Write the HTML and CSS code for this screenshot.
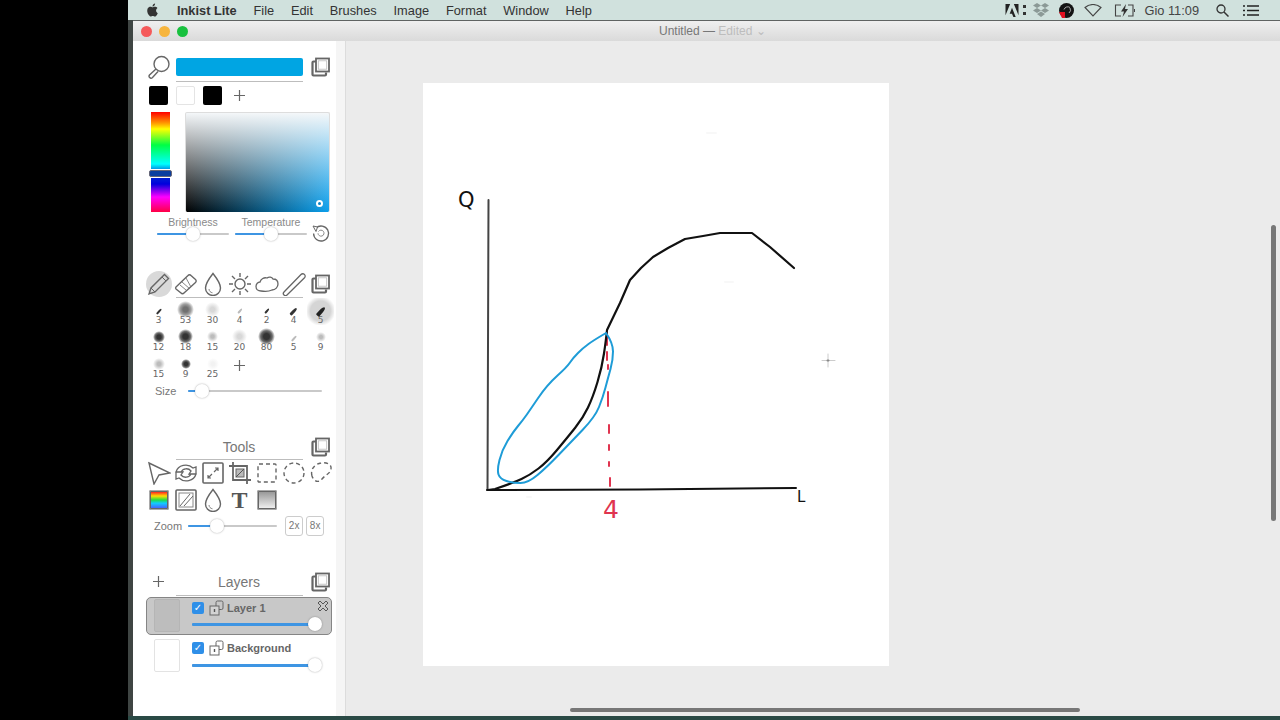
FILE: index.html
```html
<!DOCTYPE html>
<html lang="en">
<head>
<meta charset="utf-8">
<title>Inkist Lite</title>
<link rel="stylesheet" href="styles.css">
</head>
<body>
<svg class="defs" xmlns="http://www.w3.org/2000/svg">
  <symbol id="clone" viewBox="0 0 20 20"><path d="M13 4.500H2.500a1 1 0 0 0-1 1v12a1 1 0 0 0 1 1H14a1 1 0 0 0 1-1v-2" fill="none" stroke="#666" stroke-width="2.200"/><rect x="5" y="1.500" width="13" height="13" fill="#fff" stroke="#666" stroke-width="1.800"/><rect x="7.300" y="3.800" width="8.400" height="8.400" fill="#fff" stroke="#bbb" stroke-width=".8"/></symbol>
  <symbol id="plus" viewBox="0 0 13 13"><path d="M6.500 1v11M1 6.500h11" stroke="#666" stroke-width="1.200"/></symbol>
  <symbol id="lock" viewBox="0 0 16 16"><rect x="1" y="6" width="9" height="9" fill="#fff" fill-opacity=".2" stroke="#666"/><path d="M7 6V2.500a1.500 1.500 0 0 1 1.500-1.500h4A1.500 1.500 0 0 1 14 2.500V8a1.500 1.500 0 0 1-1.500 1.500H10" fill="none" stroke="#666"/><path d="M5.500 9v3" stroke="#555" stroke-width="1.400"/></symbol>
  <symbol id="drop" viewBox="0 0 24 24"><path d="M12 1.500C12 1.500 4.500 11 4.500 16a7.500 7.500 0 0 0 15 0C19.500 11 12 1.500 12 1.500Z" fill="none" stroke="#666" stroke-width="1.400"/><path d="M8 17c0 2 1.500 3.500 3.500 3.800" fill="none" stroke="#888"/></symbol>
</svg>

<div class="desktop-side"></div>
<div class="desktop">
  <header class="menubar">
    <svg class="apple" viewBox="0 0 24 24"><path fill="#333" d="M12.152 6.896c-.948 0-2.415-1.078-3.96-1.04-2.04.027-3.91 1.183-4.961 3.014-2.117 3.675-.546 9.103 1.519 12.09 1.013 1.454 2.208 3.09 3.792 3.039 1.52-.065 2.09-.987 3.935-.987 1.831 0 2.35.987 3.96.948 1.637-.026 2.676-1.48 3.676-2.948 1.156-1.688 1.636-3.325 1.662-3.415-.039-.013-3.182-1.221-3.22-4.857-.026-3.04 2.48-4.494 2.597-4.559-1.429-2.09-3.623-2.324-4.39-2.376-2-.156-3.675 1.09-4.61 1.09zM15.53 3.83c.843-1.012 1.4-2.427 1.245-3.83-1.207.052-2.662.805-3.532 1.818-.78.896-1.454 2.338-1.273 3.714 1.338.104 2.715-.688 3.559-1.701"/></svg>
    <nav class="menus">
      <span class="app">Inkist Lite</span><span>File</span><span>Edit</span><span>Brushes</span><span>Image</span><span>Format</span><span>Window</span><span>Help</span>
    </nav>
    <div class="status">
      <svg class="st-adobe" viewBox="0 0 14 14"><path fill="#222" d="M0 0h5L0 12zM14 0H9l5 12zM7 4l4 10H8.500L7 10.500H4.500z"/></svg>
      <svg class="st-dots" viewBox="0 0 3 12"><path fill="#333" d="M0 1h3v3H0zM0 8h3v3H0z"/></svg>
      <svg class="st-dropbox" viewBox="0 0 16 16"><path fill="#8b9996" d="M4 1l4 2.500L4 6 0 3.500zM12 1l4 2.500L12 6 8 3.500zM4 6l4 2.500L4 11 0 8.500zM12 6l4 2.500L12 11 8 8.500zM8 9.500l4 2.500-4 3-4-3z"/></svg>
      <svg class="st-obs" viewBox="0 0 15 15"><circle cx="7.500" cy="7.500" r="7.500" fill="#141414"/><path d="M0 9h6v6H3z" fill="#e01020"/><path d="M5 6.500a4 4 0 0 1 6-2M11 5a4 4 0 0 1-1 5" fill="none" stroke="#ccc" stroke-width=".8"/></svg>
      <svg class="st-wifi" viewBox="0 0 18 13"><path d="M1 3.500C5.500-.5 12.500-.5 17 3.500L9 12z" fill="none" stroke="#444" stroke-width="1.100"/></svg>
      <svg class="st-batt" viewBox="0 0 21 13"><path d="M7 1H1.500v11H7M14 1h5v11h-5" fill="none" stroke="#444" stroke-width="1.100"/><path d="M12 0L7 7.500h3L8.500 13l5.500-8h-3z" fill="#333"/><path d="M20 5h1v3h-1z" fill="#444"/></svg>
      <span class="clock">Gio 11:09</span>
      <svg class="st-search" viewBox="0 0 13 13"><circle cx="5" cy="5" r="4" fill="none" stroke="#333" stroke-width="1.300"/><path d="M8 8l4.500 4.500" stroke="#333" stroke-width="1.500"/></svg>
      <svg class="st-list" viewBox="0 0 16 11"><path d="M4 1h12M4 5.500h12M4 10h12M0 1h2M0 5.500h2M0 10h2" stroke="#222" stroke-width="1.300"/></svg>
    </div>
  </header>

  <div class="window">
    <div class="titlebar">
      <div class="lights"><i class="light red"></i><i class="light amber"></i><i class="light green"></i></div>
      <div class="title">Untitled — <span class="edited">Edited ⌄</span></div>
    </div>

    <div class="main">
      <aside class="sidebar">
        <div class="panel">
          <div class="grid sec-color">
            <svg class="ic-m" viewBox="0 0 24 24"><circle cx="14.500" cy="9" r="7.500" fill="none" stroke="#666" stroke-width="1.400"/><path d="M9 14l-6.500 6a2 2 0 0 0 2.800 2.800L11 16.500" fill="none" stroke="#666" stroke-width="1.400"/></svg>
            <div class="colorbar"></div>
            <svg class="ic"><use href="#clone"/></svg>
          </div>
          <div class="rule"></div>
          <div class="grid swatches">
            <i class="swatch black"></i><i class="swatch white"></i><i class="swatch black"></i>
            <svg class="ic-plus"><use href="#plus"/></svg>
          </div>

          <div class="picker">
            <div class="hue"><i class="hue-mark"></i></div>
            <div class="sv"><i class="sv-mark"></i></div>
          </div>

          <div class="adjust-labels"><span>Brightness</span><span>Temperature</span></div>
          <div class="adjust">
            <div class="slider sl-adjust"><div class="fill" style="width:50%"><i class="knob"></i></div></div>
            <div class="slider sl-adjust"><div class="fill" style="width:50%"><i class="knob"></i></div></div>
            <svg class="ic-reset" viewBox="0 0 20 20"><path d="M5 5a7.500 7.500 0 1 1-2.400 5.500" fill="none" stroke="#666" stroke-width="1.300"/><path d="M7.500 8.500a3 3 0 1 1-.5 1.800" fill="none" stroke="#888" stroke-width="1"/><path d="M2 3l4.500 1L5 8.500z" fill="#fff" stroke="#666"/></svg>
          </div>

          <div class="grid sec-brush">
            <span class="sel-tool"><svg class="ic-m" viewBox="0 0 24 24"><path d="M2 22l2-6L17.500 2.500l4 4L8 20z" fill="none" stroke="#666" stroke-width="1.400"/><path d="M4 16l4 4M15 5l4 4" stroke="#666"/></svg></span>
            <svg class="ic-m" viewBox="0 0 24 24"><path d="M2 15L14 3.500a2 2 0 0 1 3 0l4.500 4a2 2 0 0 1 0 3L10 21a2 2 0 0 1-3 0l-5-4a1.500 1.500 0 0 1 0-2z" fill="none" stroke="#666" stroke-width="1.400"/><path d="M8 10l8 7M12 6l5 9M6 13l6 5" stroke="#777" stroke-width=".9" fill="none"/></svg>
            <svg class="ic-m"><use href="#drop"/></svg>
            <svg class="ic-m" viewBox="0 0 24 24"><circle cx="12" cy="12" r="5" fill="none" stroke="#666" stroke-width="1.400"/><path d="M12 1v4M12 19v4M1 12h4M19 12h4M4 4l3 3M17 17l3 3M20 4l-3 3M7 17l-3 3" stroke="#666" stroke-width="1.400"/></svg>
            <svg class="ic-m" viewBox="0 0 24 24"><path d="M6 19c-3 0-5-2-5-4.500S3 10 5 10c1-3 4-5 7-4 2-1.500 5-1 6 1 3 0 5 2 5 5s-2.500 6-6 6c-3 1.500-8 1.500-11 1z" fill="none" stroke="#666" stroke-width="1.300"/></svg>
            <svg class="ic-m" viewBox="0 0 24 24"><path d="M2 20L19 2.500a2.400 2.400 0 0 1 3.500 3.300L5 23a2 2 0 0 1-3-3z" fill="none" stroke="#666" stroke-width="1.300"/></svg>
            <svg class="ic"><use href="#clone"/></svg>
          </div>
          <div class="rule"></div>

          <div class="grid brushes">
            <div class="brush"><i class="tip t-s"></i><b>3</b></div>
            <div class="brush"><i class="blob b-17 dark-soft"></i><b>53</b></div>
            <div class="brush"><i class="blob b-15 soft-l"></i><b>30</b></div>
            <div class="brush"><i class="tip t-xs faint"></i><b>4</b></div>
            <div class="brush"><i class="tip t-xs"></i><b>2</b></div>
            <div class="brush"><i class="tip t-m"></i><b>4</b></div>
            <div class="brush selected"><i class="tip t-l"></i><b>5</b></div>

            <div class="brush"><i class="blob b-12 dark"></i><b>12</b></div>
            <div class="brush"><i class="blob b-15 dark"></i><b>18</b></div>
            <div class="brush"><i class="blob b-11 soft-m"></i><b>15</b></div>
            <div class="brush"><i class="blob b-15 soft-l"></i><b>20</b></div>
            <div class="brush"><i class="blob b-17 dark"></i><b>80</b></div>
            <div class="brush"><i class="tip t-s faint"></i><b>5</b></div>
            <div class="brush"><i class="blob b-10 soft-m"></i><b>9</b></div>

            <div class="brush"><i class="blob b-12 soft-m"></i><b>15</b></div>
            <div class="brush"><i class="blob b-10 dark"></i><b>9</b></div>
            <div class="brush"><i class="blob b-12 ghost"></i><b>25</b></div>
            <svg class="ic-plus plus-brush"><use href="#plus"/></svg>
          </div>

          <div class="size-row">
            <span class="lbl">Size</span>
            <div class="slider sl-size"><div class="fill" style="width:10%"><i class="knob"></i></div></div>
          </div>

          <div class="head sec-tools"><span class="head-title">Tools</span><svg class="ic"><use href="#clone"/></svg></div>
          <div class="rule"></div>
          <div class="grid tools">
            <svg class="ic-m" viewBox="0 0 24 24"><path d="M2 2l21 10-11 2-5 9z" fill="none" stroke="#666" stroke-width="1.400"/></svg>
            <svg class="ic-m" viewBox="0 0 24 24"><path d="M2 11a10 9 0 0 1 17-4l3-1v7h-7l2-3a6 6 0 0 0-10 1zM22 13a10 9 0 0 1-17 4l-3 1v-7h7l-2 3a6 6 0 0 0 10-1z" fill="none" stroke="#666" stroke-width="1.300"/></svg>
            <svg class="ic-m" viewBox="0 0 24 24"><rect x="2" y="2" width="20" height="20" rx="1" fill="none" stroke="#666" stroke-width="1.600"/><path d="M7 17l4-4M13 11l4-4M14 7h3v3M7 14v3h3" fill="none" stroke="#666" stroke-width="1.200"/></svg>
            <svg class="ic-m" viewBox="0 0 24 24"><path d="M1 5h18v18M5 1v18h18" fill="none" stroke="#666" stroke-width="1.800"/><rect x="8" y="8" width="8" height="8" fill="#bbb" stroke="#666"/><path d="M8 16l8-8" stroke="#555"/></svg>
            <svg class="ic-m" viewBox="0 0 24 24"><rect x="3" y="3" width="18" height="18" rx="1" fill="none" stroke="#666" stroke-width="1.400" stroke-dasharray="4 3"/></svg>
            <svg class="ic-m" viewBox="0 0 24 24"><circle cx="12" cy="12" r="10" fill="none" stroke="#666" stroke-width="1.400" stroke-dasharray="4 3"/></svg>
            <svg class="ic-m" viewBox="0 0 24 24"><path d="M3 15C1 8 6 3 12 2c5-1 11 1 10 6-1 5-6 6-9 10-3 4-8 3-10-3z" fill="none" stroke="#666" stroke-width="1.400" stroke-dasharray="4 3"/></svg>

            <div class="tile rainbow"></div>
            <svg class="ic-m" viewBox="0 0 24 24"><rect x="2" y="2" width="20" height="20" rx="1" fill="none" stroke="#666" stroke-width="1.600"/><rect x="5" y="5" width="14" height="14" fill="none" stroke="#888"/><path d="M6 18L16 6M10 18L19 8" stroke="#666" fill="none"/></svg>
            <svg class="ic-m"><use href="#drop"/></svg>
            <span class="t-tool">T</span>
            <div class="tile grad"></div>
          </div>

          <div class="zoom-row">
            <span class="lbl">Zoom</span>
            <div class="slider sl-zoom"><div class="fill" style="width:33%"><i class="knob"></i></div></div>
            <span class="zbtn">2x</span><span class="zbtn">8x</span>
          </div>

          <div class="head sec-layers"><svg class="ic-plus"><use href="#plus"/></svg><span class="head-title">Layers</span><svg class="ic"><use href="#clone"/></svg></div>
          <div class="rule"></div>

          <div class="layer active">
            <div class="thumb"></div>
            <div class="layer-body">
              <div class="layer-top">
                <span class="check">✓</span>
                <svg class="ic-lock"><use href="#lock"/></svg>
                <span class="layer-name">Layer 1</span>
                <svg class="ic-x" viewBox="0 0 12 12"><path d="M3 1l3 3 3-3 2 2-3 3 3 3-2 2-3-3-3 3-2-2 3-3-3-3z" fill="none" stroke="#555"/></svg>
              </div>
              <div class="slider sl-layer"><div class="fill" style="width:100%"><i class="knob"></i></div></div>
            </div>
          </div>
          <div class="layer">
            <div class="thumb"></div>
            <div class="layer-body">
              <div class="layer-top">
                <span class="check">✓</span>
                <svg class="ic-lock"><use href="#lock"/></svg>
                <span class="layer-name">Background</span>
              </div>
              <div class="slider sl-layer"><div class="fill" style="width:100%"><i class="knob"></i></div></div>
            </div>
          </div>
        </div>
      </aside>

      <section class="workspace">
        <div class="page">
          <svg class="drawing" viewBox="423 83 466 583">
            <path class="smudge" d="M707 133h9M725 282h8M527 497h4"/>
            <path class="axis thin" d="M488.500 200L487.500 490"/>
            <path class="axis" d="M487 490L640 489.500L796 488"/>
            <path class="ink-red" d="M607 333V345M607 352v8M608 365v4M608 392v14M609 425v8M609 445v5M609 462v4M610 478v8"/>
            <path class="ink" d="M488 490L495 489Q513 483 521.500 479Q530 475 538.500 468.500Q547 462 557 450Q567 438 575 428Q583 418 588 407.500Q593 397 597.500 382Q602 367 604 353.500Q606 340 607 330L620 303L630 280L641 268L653 257L668 248L685 239L703 236L720 233L752 233L770 247L794 268"/>
            <path class="blue" d="M606 333Q594 340 588.500 344Q583 348 578 353Q573 358 570 362.500Q567 367 557 376Q547 385 538.500 397.500Q530 410 526.500 415Q523 420 518 426Q513 432 507.500 441Q502 450 499.500 460Q497 470 498.500 474.500Q500 479 506.500 481Q513 483 520.500 483Q528 483 537.500 475Q547 467 558.500 455Q570 443 582.500 430Q595 417 599 407Q603 397 605.500 387.500Q608 378 610.500 369Q613 360 613 351.500Q613 343 606 333"/>
            <text class="hand" x="458" y="207">Q</text>
            <text class="hand small" x="797" y="502">L</text>
            <text class="hand four" x="603" y="518">4</text>
            <path class="cross" d="M828 354v13M822 360.500h13"/>
            <path class="cross-dot" d="M827.500 360.500h1"/>
          </svg>
        </div>
        <i class="scroll-v"></i>
        <i class="scroll-h"></i>
      </section>
    </div>
  </div>
  <div class="dock-edge"></div>
</div>
</body>
</html>
```
FILE: styles.css
```css
* { box-sizing: border-box; }
html, body { margin: 0; height: 100%; }
body {
  display: flex;
  width: 1280px;
  height: 720px;
  overflow: hidden;
  background: #000;
  font-family: "Liberation Sans", Arial, sans-serif;
  color: #555;
}
i { display: block; }
.defs { display: none; }
.desktop-side { width: 128px; flex: none; background: #000; }
.desktop { flex: 1; display: flex; flex-direction: column; min-width: 0; background: #3f4543; }

/* Menu bar */
.menubar {
  height: 20px;
  flex: none;
  display: flex;
  align-items: center;
  background: #d0e1dd;
  padding-left: 18px;
  font-size: 12.8px;
  color: #333;
}
.apple { width: 13px; height: 14px; margin-top: -1px; }
.menus { display: flex; gap: 16.800px; margin-left: 18px; }
.app { font-weight: bold; }
.status { margin-left: auto; display: flex; align-items: center; padding-right: 21px; }
.st-adobe { width: 14px; height: 13px; }
.st-dots { width: 3px; height: 12px; margin-left: 4px; }
.st-dropbox { width: 16px; height: 16px; margin-left: 7px; }
.st-obs { width: 15px; height: 15px; margin-left: 10px; }
.st-wifi { width: 18px; height: 13px; margin-left: 10px; }
.st-batt { width: 21px; height: 13px; margin-left: 12px; }
.clock { margin-left: 9px; color: #444; }
.st-search { width: 13px; height: 13px; margin-left: 17px; }
.st-list { width: 16px; height: 11px; margin-left: 14px; }

/* Window */
.window {
  flex: 1;
  min-height: 0;
  display: flex;
  flex-direction: column;
  margin-left: 5px;
  border-top: 1px solid #5f6362;
}
.titlebar {
  height: 20px;
  flex: none;
  display: flex;
  align-items: center;
  background: linear-gradient(#efefef, #dadada);
  padding-left: 8px;
  font-size: 12px;
  color: #777;
}
.lights { display: flex; gap: 7px; }
.light { width: 11px; height: 11px; border-radius: 50%; }
.red { background: #f5595a; }
.amber { background: #f7b53e; }
.green { background: #19c13f; }
.title { margin-left: 471px; white-space: nowrap; }
.edited { color: #bdbdbd; }
.main { flex: 1; display: flex; min-height: 0; }

/* Sidebar */
.sidebar {
  width: 213px;
  flex: none;
  background: #f5f5f5;
  border-right: 1px solid #dcdcdc;
  padding-right: 9px;
}
.panel { height: 100%; background: #fff; padding-left: 12px; }
.grid { display: grid; grid-template-columns: repeat(7, 27px); justify-items: center; align-items: center; }
.ic { width: 20px; height: 20px; }
.ic-m { width: 24px; height: 24px; }
.ic-plus { width: 13px; height: 13px; }
.rule { height: 1px; width: 127px; margin-left: 31px; background: #bdbdbd; }

.sec-color { padding-top: 13px; height: 39px; margin-bottom: 1px; }
.colorbar { grid-column: 2 / 7; width: 127px; height: 18px; background: #00a5e3; border-radius: 2px; }
.swatches { height: 27px; }
.swatch { width: 19px; height: 19px; border-radius: 2px; }
.swatch.black { background: #000; }
.swatch.white { background: #fff; border: 1px solid #e4e4e4; }

.picker { display: flex; margin-top: 3px; margin-left: 6px; height: 100px; }
.hue {
  position: relative;
  width: 19px;
  background: linear-gradient(#f00 0%, #ff9800 11%, #ff0 17%, #0f4 33%, #0ff 52%, #03c 62%, #00d 72%, #f0f 85%, #f04 100%);
}
.hue-mark {
  position: absolute;
  left: -2px;
  top: 58px;
  width: 23px;
  height: 7px;
  background: #0a3ea0;
  border: 1px solid #667;
  border-radius: 2px;
  box-shadow: 0 0 0 1px #fff;
}
.sv {
  position: relative;
  width: 145px;
  margin-left: 15px;
  border-radius: 2px;
  background:
    linear-gradient(#f4f7f9, rgba(255, 255, 255, 0)),
    linear-gradient(to right, #000, #0b9fec);
  border: 1px solid #ddd;
  border-bottom: 0;
}
.sv-mark {
  position: absolute;
  left: 130px;
  top: 87px;
  width: 7px;
  height: 7px;
  border: 2px solid #fff;
  border-radius: 50%;
  background: #0a84c8;
}

.adjust-labels { display: flex; height: 12px; margin-top: 5px; margin-left: 9px; font-size: 10.5px; line-height: 11px; color: #8a8a8a; }
.adjust-labels span { width: 78px; text-align: center; }
.adjust { display: flex; align-items: center; height: 12px; margin-top: -1px; margin-left: 12px; gap: 6px; }

.slider { height: 2px; background: #c9c9c9; border-radius: 1px; flex: none; }
.fill { position: relative; height: 100%; background: #3e95e3; border-radius: 1px; }
.knob {
  position: absolute;
  right: -7px;
  top: -6px;
  width: 14px;
  height: 14px;
  border-radius: 50%;
  background: #fff;
  box-shadow: 0 0 2px rgba(0, 0, 0, .35);
}
.sl-adjust { width: 72px; }
.ic-reset { width: 20px; height: 20px; margin-top: -2px; margin-left: -2px; }

.sec-brush { height: 27px; margin-top: 30px; }
.sel-tool {
  width: 26px; height: 26px; border-radius: 50%;
  background: #d9d9d9; display: flex; align-items: center; justify-content: center;
}
.brushes { grid-auto-rows: 27px; }
.brush { width: 27px; height: 27px; display: grid; grid-template-rows: 26px; justify-items: center; align-items: center; }
.brush > * { grid-row: 1; grid-column: 1; }
.brush b { font: 9px/10px "DejaVu Sans", sans-serif; color: #666; align-self: start; margin-top: 17px; }
.brush.selected { background: radial-gradient(circle at 50% 13px, #d5d5d5 0 10px, rgba(213, 213, 213, 0) 15px); }
.tip { background: #333; transform: rotate(42deg); border-radius: 50% 50% 1px 1px; }
.t-xs { width: 2px; height: 6px; }
.t-s { width: 2px; height: 7px; }
.t-m { width: 3px; height: 9px; }
.t-l { width: 4px; height: 11px; background: #222; }
.faint { background: #bbb; }
.blob { border-radius: 50%; margin-top: -3px; }
.b-17 { width: 17px; height: 17px; }
.b-15 { width: 15px; height: 15px; }
.b-12 { width: 12px; height: 12px; }
.b-11 { width: 11px; height: 11px; }
.b-10 { width: 10px; height: 10px; }
.dark { background: radial-gradient(circle closest-side, #333 0 35%, rgba(60, 60, 60, .75) 68%, rgba(60, 60, 60, 0) 100%); }
.dark-soft { background: radial-gradient(circle closest-side, #707070 0 30%, rgba(120, 120, 120, .7) 65%, rgba(120, 120, 120, 0) 100%); }
.soft-l { background: radial-gradient(circle closest-side, #d8d8d8 0 30%, rgba(215, 215, 215, 0) 100%); }
.soft-m { background: radial-gradient(circle closest-side, #bcbcbc 0 30%, rgba(190, 190, 190, 0) 100%); }
.ghost { background: radial-gradient(circle closest-side, #f2f2f2 0 30%, rgba(240, 240, 240, 0) 100%); }
.plus-brush { align-self: start; margin-top: 7px; }

.size-row { display: flex; align-items: center; height: 14px; margin-top: 5px; margin-left: 10px; }
.lbl { font-size: 11px; color: #777; }
.sl-size { width: 134px; margin-left: 12px; }

.head { display: flex; align-items: center; height: 25px; position: relative; justify-content: flex-end; padding-right: 5px; }
.head-title { position: absolute; left: 0; width: 188px; text-align: center; font-size: 14px; color: #777; }
.sec-tools { margin-top: 36px; }
.sec-layers { margin-top: 32px; height: 27px; justify-content: space-between; padding-left: 7px; }

.tools { grid-auto-rows: 27px; margin-top: -1px; }
.tile { width: 20px; height: 20px; border: 2px solid #666; border-radius: 2px; outline: 1px solid #aaa; outline-offset: -1px; }
.rainbow { background: linear-gradient(#f22, #fd0 25%, #2d4 50%, #1cf 70%, #46f 100%); }
.grad { background: linear-gradient(#999, #eee); }
.t-tool { font: bold 24px/24px "Liberation Serif", serif; color: #555; }

.zoom-row { display: flex; align-items: center; height: 20px; margin-top: 3px; margin-left: 9px; }
.sl-zoom { width: 89px; margin-left: 6px; }
.zbtn {
  width: 18px;
  height: 20px;
  border: 1px solid #ccc;
  border-radius: 3px;
  font-size: 10px;
  line-height: 18px;
  text-align: center;
  color: #777;
}
.sl-zoom + .zbtn { margin-left: 8px; }
.zbtn + .zbtn { margin-left: 3px; }

.layer { display: flex; width: 186px; height: 38px; margin-left: 1px; margin-top: 1px; padding-left: 7px; border: 1px solid transparent; }
.layer + .layer { margin-top: 2px; }
.layer.active { background: #c8c8c8; border-color: #858585; border-radius: 5px; }
.thumb { width: 26px; height: 33px; margin-top: 1px; border: 1px solid #e3e3e3; border-radius: 2px; background: #fff; flex: none; }
.active .thumb { background: #bdbdbd; border-color: #b5b5b5; }
.layer-body { flex: 1; margin-left: 12px; padding-top: 3px; min-width: 0; }
.layer-top { display: flex; align-items: center; height: 14px; }
.check {
  width: 12px; height: 12px; border-radius: 2px;
  background: #2f8fe8; color: #fff;
  font: bold 10px/12px "DejaVu Sans", sans-serif; text-align: center; flex: none;
}
.ic-lock { width: 16px; height: 16px; margin-left: 5px; flex: none; }
.layer-name { font-size: 11px; color: #666; margin-left: 2px; font-weight: bold; }
.ic-x { width: 12px; height: 12px; margin-left: auto; margin-right: 2px; margin-top: -4px; }
.sl-layer { width: 123px; margin-top: 8px; height: 3px; }
.layer:not(.active) .sl-layer { margin-top: 9px; }

/* Workspace */
.workspace { position: relative; flex: 1; background: #ebebeb; padding: 42px 0 0 77px; min-width: 0; }
.page { width: 466px; height: 583px; background: #fff; }
.drawing { display: block; width: 466px; height: 583px; }
.drawing path { fill: none; stroke-linecap: round; stroke-linejoin: round; }
.axis { stroke: #111; stroke-width: 2; }
.axis.thin { stroke: #444; }
.ink { stroke: #111; stroke-width: 2.200; }
.blue { stroke: #1e9cd7; stroke-width: 2; }
.ink-red { stroke: #e0344f; stroke-width: 2; }
.smudge { stroke: #f8f8f8; stroke-width: 2; }
.cross { stroke: #ccc; stroke-width: 1; }
.cross-dot { stroke: #888; stroke-width: 2; }
.hand { font-family: "DejaVu Sans", sans-serif; font-size: 21px; fill: #111; }
.hand.small { font-size: 15px; }
.hand.four { font-size: 25px; fill: #e0344f; }
.scroll-v { position: absolute; left: 925px; top: 184px; width: 5px; height: 296px; background: #777; border-radius: 3px; }
.scroll-h { position: absolute; left: 224px; bottom: 4px; width: 510px; height: 4px; background: #777; border-radius: 2px; }
.dock-edge { height: 4px; flex: none; background: #2a4a45; }
```
